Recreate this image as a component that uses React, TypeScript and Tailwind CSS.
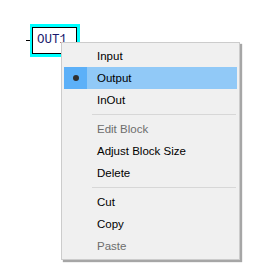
import React from "react";

type Item =
  | { type: "item"; label: string; disabled?: boolean; checked?: boolean; active?: boolean }
  | { type: "sep" };

const items: Item[] = [
  { type: "item", label: "Input" },
  { type: "item", label: "Output", checked: true, active: true },
  { type: "item", label: "InOut" },
  { type: "sep" },
  { type: "item", label: "Edit Block", disabled: true },
  { type: "item", label: "Adjust Block Size" },
  { type: "item", label: "Delete" },
  { type: "sep" },
  { type: "item", label: "Cut" },
  { type: "item", label: "Copy" },
  { type: "item", label: "Paste", disabled: true },
];

export default function App() {
  return (
    <div className="relative w-[261px] h-[279px] bg-white overflow-hidden">
      {/* wire */}
      <div className="absolute left-[26px] top-[40px] w-[6px] h-px bg-black" />
      {/* block */}
      <div className="absolute left-[30px] top-[24px] w-[50px] h-[33px] border-[3px] border-l-2 border-[#00ffff]">
        <div className="w-full h-full border border-black bg-white flex items-center pl-[4px]">
          <span
            className="text-[12.5px] leading-none text-[#1a1a6e]"
            style={{ fontFamily: '"Liberation Mono", "Courier New", monospace' }}
          >
            OUT1
          </span>
        </div>
      </div>
      {/* context menu */}
      <div
        className="absolute left-[61px] top-[42px] w-[179px] h-[218px] bg-[#f0f0f0] border border-[#cccccc] shadow-[2px_2px_1px_rgba(0,0,0,0.35)] py-[2px] pl-[2px] pr-[2px] flex flex-col"
        style={{ fontFamily: '"Liberation Sans", Arial, sans-serif' }}
      >
        {items.map((it, i) =>
          it.type === "sep" ? (
            <div key={i} className="h-[7px] flex items-center pl-[28px] pr-px">
              <div className="w-full h-px bg-[#d7d7d7]" />
            </div>
          ) : (
            <div
              key={i}
              className={`h-[22px] flex items-center text-[11.5px] ${
                it.active ? "bg-[#91c9f7]" : ""
              } ${it.disabled ? "text-[#6d6d6d]" : "text-black"}`}
            >
              <div
                className={`w-[23px] h-full flex items-center justify-center ${
                  it.active ? "bg-[#5cb0f8]" : ""
                }`}
              >
                {it.checked && <div className="w-[6px] h-[6px] rounded-full bg-[#2f2f2f]" />}
              </div>
              <span className="pl-[10px] pt-px">{it.label}</span>
            </div>
          )
        )}
      </div>
    </div>
  );
}
